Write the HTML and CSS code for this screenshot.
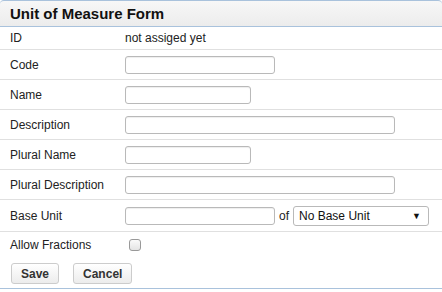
FILE: index.html
```html
<!DOCTYPE html>
<html lang="en">
  <head>
    <meta charset="utf-8">
    <title>Unit of Measure Form</title>
    <link rel="stylesheet" href="styles.css">
  </head>
  <body>
    <section class="panel">
      <h1 class="panelTitle">Unit of Measure Form</h1>
      <form class="uomForm" action="">
        <div class="row rowId">
          <label class="label">ID</label>
          <span class="value">not assiged yet</span>
        </div>
        <div class="row">
          <label class="label" for="code">Code</label>
          <input type="text" id="code" class="field fieldMid">
        </div>
        <div class="row">
          <label class="label" for="name">Name</label>
          <input type="text" id="name" class="field fieldShort">
        </div>
        <div class="row">
          <label class="label" for="description">Description</label>
          <input type="text" id="description" class="field fieldLong">
        </div>
        <div class="row">
          <label class="label" for="pluralName">Plural Name</label>
          <input type="text" id="pluralName" class="field fieldShort">
        </div>
        <div class="row">
          <label class="label" for="pluralDescription">Plural Description</label>
          <input type="text" id="pluralDescription" class="field fieldLong">
        </div>
        <div class="row rowBase">
          <label class="label" for="baseUnit">Base Unit</label>
          <input type="text" id="baseUnit" class="field fieldMid">
          <span class="of">of</span>
          <span class="selectWrap">
            <select class="select" name="baseUnitRef">
              <option>No Base Unit</option>
            </select>
          </span>
        </div>
        <div class="row rowCheck">
          <label class="label" for="fractions">Allow Fractions</label>
          <input type="checkbox" id="fractions" class="check">
        </div>
        <div class="actions">
          <button type="button" class="btn">Save</button>
          <button type="button" class="btn">Cancel</button>
        </div>
      </form>
    </section>
  </body>
</html>
```

FILE: styles.css
```css
body {
  margin: 0;
  font-family: "Liberation Sans", Arial, sans-serif;
  font-size: 12px;
  color: #222;
  background: #fff;
}
.panel {
  border-bottom: 1px solid #a9c2dc;
  height: 288px;
}
.panelTitle {
  margin: 0;
  box-sizing: border-box;
  height: 27px;
  line-height: 25px;
  padding-left: 10px;
  font-size: 15px;
  font-weight: bold;
  color: #111;
  background: linear-gradient(#f7f7f7, #ececec);
  border-top: 1px solid #a9c2dc;
  border-bottom: 1px solid #a9c2dc;
  border-radius: 4px 4px 0 0;
}
.row {
  display: flex;
  align-items: center;
  height: 29px;
  border-bottom: 1px solid #e0e0e0;
}
.rowId {
  height: 22px;
}
.rowBase {
  height: 31px;
}
.rowCheck {
  height: 26px;
  border-bottom: none;
}
.label {
  width: 115px;
  padding-left: 10px;
  flex: none;
}
.value {
  color: #222;
}
.field {
  box-sizing: border-box;
  height: 18px;
  border: 1px solid #b9b9b9;
  border-radius: 3px;
  box-shadow: inset 0 1px 1px #eee;
  padding: 0 3px;
  font: inherit;
}
.fieldShort {
  width: 126px;
}
.fieldMid {
  width: 150px;
}
.fieldLong {
  width: 270px;
}
.of {
  margin: 0 4px 0 4px;
}
.selectWrap {
  position: relative;
  display: inline-block;
}
.selectWrap::after {
  content: "\25BC";
  position: absolute;
  right: 8px;
  top: 5px;
  font-size: 9px;
  color: #111;
  pointer-events: none;
}
.select {
  appearance: none;
  box-sizing: border-box;
  width: 136px;
  height: 20px;
  padding: 0 5px;
  border: 1px solid #b9b9b9;
  border-radius: 3px;
  background: #fff;
  font: inherit;
  font-size: 12px;
  color: #111;
}
.check {
  appearance: none;
  margin: 0 0 0 4px;
  width: 12px;
  height: 12px;
  border: 1px solid #999;
  border-radius: 3px;
  background: linear-gradient(#fafafa, #e4e4e4);
}
.actions {
  display: flex;
  gap: 14px;
  padding: 5px 0 0 11px;
}
.btn {
  height: 21px;
  padding: 0 9px;
  font: inherit;
  font-weight: bold;
  color: #333;
  border: 1px solid #ccc;
  border-radius: 3px;
  background: linear-gradient(#fff, #ececec);
}
```
